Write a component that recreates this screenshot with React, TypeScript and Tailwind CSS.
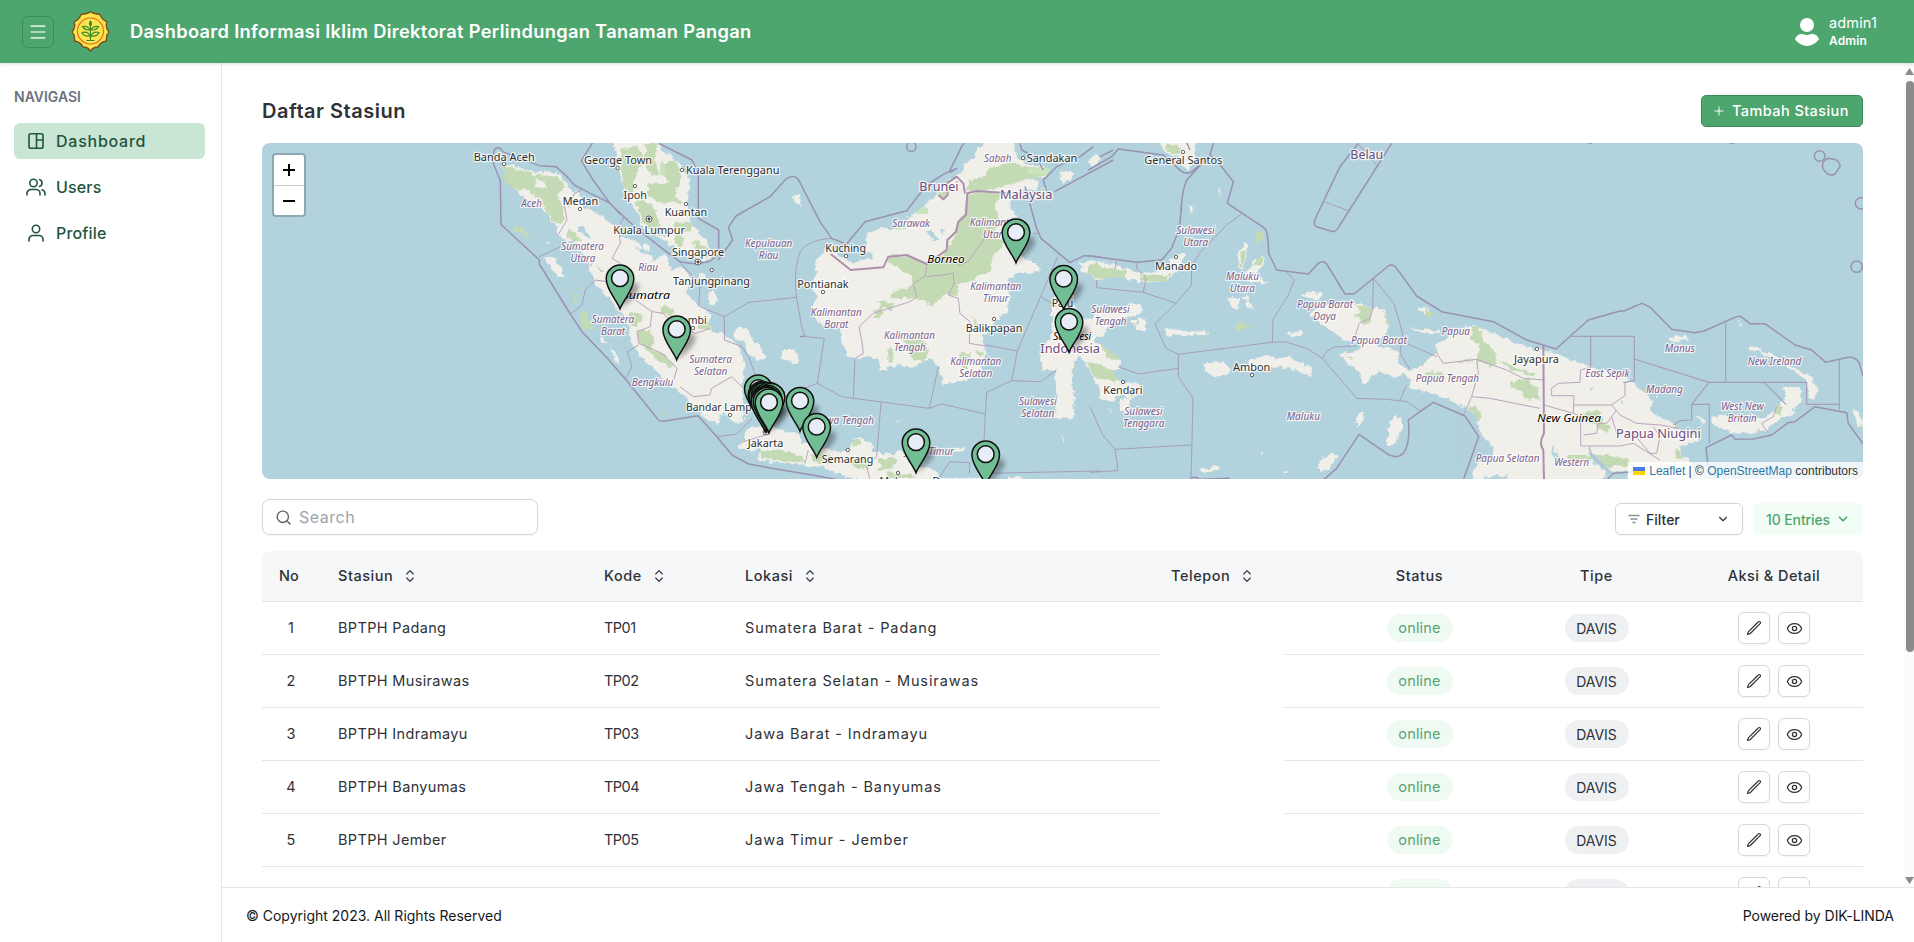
import React from "react";
import { Menu, Plus, Search, ChevronDown, ChevronsUpDown, Eye } from "lucide-react";

type Label = [string, number, number, number];

const cities: Label[] = [
  ["Banda Aceh", 473.7, 160.7, 61], ["George Town", 584, 163.7, 68], ["Kuala Terengganu", 686, 174, 93.5],
  ["Medan", 562.7, 205.3, 35.5], ["Ipoh", 623.5, 198.7, 23.5], ["Kuantan", 664.7, 216, 42.5],
  ["Kuala Lumpur", 613.3, 233.7, 71.7], ["Singapore", 672, 255.7, 52.3], ["Tanjungpinang", 673, 284.7, 77],
  ["Jambi", 679, 324, 27.7], ["Bandar Lampung", 686, 411, 85], ["Jakarta", 747.7, 447.3, 35.7],
  ["Semarang", 821.7, 462.7, 51.7], ["Kuching", 825.3, 251.7, 40.7], ["Pontianak", 797.3, 287.7, 51.3],
  ["Balikpapan", 965.7, 331.7, 56.7], ["Sandakan", 1026.7, 162, 50.7], ["Palu", 1051.7, 307.3, 21.7],
  ["General Santos", 1144.3, 164, 78], ["Manado", 1155, 269.7, 42], ["Ambon", 1233, 371, 37.3],
  ["Kendari", 1103.3, 394.3, 39.3], ["Jayapura", 1514, 363, 45], ["Malang", 879.5, 485, 37], ["Denpasar", 932.3, 485, 50],
];

const provinces: Label[] = [
  ["Aceh", 521.3, 206.7, 20.7], ["Sumatera", 561.3, 250.3, 42.7], ["Utara", 570.5, 262.3, 24.7], ["Riau", 638.3, 270.7, 19.7],
  ["Sumatera", 591.7, 322.7, 42.5], ["Barat", 601, 334.7, 24], ["Bengkulu", 631.7, 386, 41.7],
  ["Sumatera", 689.3, 362.7, 42.7], ["Selatan", 694, 374.7, 33.3], ["Kepulauan", 745, 247, 47.3], ["Riau", 758.7, 259, 19.7],
  ["Sarawak", 892.3, 227.3, 37.7], ["Kalimantan", 810.7, 316.3, 51], ["Barat", 824.3, 328.3, 24],
  ["Kalimantan", 884, 339, 51], ["Tengah", 894, 350.7, 31.7], ["Kalimantan", 970.3, 289.7, 51], ["Timur", 983, 301.7, 25.7],
  ["Kalimantan", 950.3, 365.3, 51], ["Selatan", 959.3, 377, 33], ["Kalimantan", 969.7, 226, 51], ["Utara", 983, 238, 24.7],
  ["Sabah", 984, 162.3, 27.3], ["Jawa Tengah", 818, 424, 56], ["Jawa Timur", 905, 454.7, 49],
  ["Sulawesi", 1019, 405, 37.7], ["Selatan", 1021.3, 416.7, 33], ["Sulawesi", 1176.3, 234, 38.3], ["Utara", 1183.3, 246, 24.7],
  ["Sulawesi", 1091.3, 312.7, 38.3], ["Tengah", 1094.7, 324.7, 31.7], ["Maluku", 1226, 280.3, 33], ["Utara", 1230, 292.3, 24.7],
  ["Papua Barat", 1297, 308.3, 55.7], ["Daya", 1313.3, 320.3, 22.7], ["Papua Barat", 1351, 344, 55.7], ["Papua", 1441.7, 335.3, 28.3],
  ["Papua Tengah", 1415.7, 382, 63.3], ["Maluku", 1286.7, 419.7, 33.3], ["Sulawesi", 1124.3, 415.3, 38.3], ["Tenggara", 1123, 427, 41.3],
  ["Manus", 1664.7, 351.7, 30.3], ["New Ireland", 1747.7, 365.3, 53.7], ["East Sepik", 1585.3, 376.7, 44], ["Madang", 1646, 393, 36.7],
  ["West New", 1721, 409.7, 42.7], ["Britain", 1727.7, 421.7, 29], ["Papua Selatan", 1475.7, 462.3, 63.7], ["Western", 1554.3, 465.7, 34.7],
];

const countries: Label[] = [
  ["Brunei", 919.3, 190.7, 39.3], ["Malaysia", 1000, 199, 52.3], ["Indonesia", 1040.3, 352.7, 59.7],
  ["Belau", 1350.3, 159, 33], ["Papua Niugini", 1616, 437.7, 84.7],
];

const islands: Label[] = [
  ["Sumatra", 622.5, 298.7, 47.5], ["Borneo", 927.3, 262.7, 37.3], ["Sulawesi", 1053.3, 340, 37.7], ["New Guinea", 1537.3, 421.7, 63.7],
];

const dots: [number, number][] = [
  [504, 164], [617.6, 168], [682, 170], [580, 209], [635, 186], [686, 204], [711.8, 270], [730, 415], [693, 328], [847.8, 450],
  [846, 256], [823, 292], [994, 319], [1023, 158], [1183, 152], [1176, 257], [1252, 375], [1123, 382], [1537, 349], [898, 473],
];
const capitals: [number, number][] = [[649, 219], [698, 262], [766, 432]];

const markers: [number, number][] = [
  [1016, 262.5], [620, 308.5], [1063.7, 309], [1069, 352], [676.7, 359.5], [758.3, 418.5], [762, 425], [763, 426], [765, 426], [766, 428],
  [767, 427], [769, 426], [771, 427], [768, 429], [766, 430], [765, 431], [767, 431], [769, 432.5], [800, 431], [816.7, 457], [916, 472.5], [985.7, 484.5],
];

const Labels = ({ items, cls, halo }: { items: Label[]; cls: string; halo: number }) => (
  <g className={cls} stroke="#ffffff" strokeOpacity="0.75" strokeWidth={halo} strokeLinejoin="round" paintOrder="stroke">
    {items.map(([t, x, y, w], i) => (
      <text key={i} x={x} y={y} textLength={w} lengthAdjust="spacingAndGlyphs">{t}</text>
    ))}
  </g>
);

const LAND = "#f1efea";

function StationMap() {
  return (
    <svg className="block h-full w-full" viewBox="262 143 1601 336">
      <defs>
        <filter id="coast" x="0" y="0" width="100%" height="100%">
          <feTurbulence type="fractalNoise" baseFrequency="0.16" numOctaves="3" seed="4" />
          <feDisplacementMap in="SourceGraphic" scale="7" xChannelSelector="R" yChannelSelector="G" />
        </filter>
        <filter id="soft" x="-50%" y="-50%" width="200%" height="200%"><feGaussianBlur stdDeviation="2.5" /></filter>
      </defs>
      <rect x="262" y="143" width="1601" height="336" fill="#b2d2dd" />

      <g filter="url(#coast)">
        <rect x="262" y="143" width="1601" height="336" fill="none" />
        {/* Sumatra */}
        <g transform="translate(262 140) scale(.33333)">
          <path fill={LAND} d="M722 72L745 72 790 90 840 100 880 97 905 115 915 140 950 160 965 200 1010 222 1045 250 1070 265 1075 290 1110 298 1125 330 1165 345 1175 365 1200 345 1215 365 1230 390 1265 378 1290 425 1269 460 1314 500 1344 525 1349 575 1384 580 1434 620 1449 680 1440 740 1442 800 1444 850 1414 845 1379 815 1364 857 1324 830 1294 790 1254 760 1194 705 1144 660 1109 610 1099 560 1064 500 1034 470 1000 430 989 405 975 355 940 310 890 290 885 260 860 225 830 195 800 180 760 150 735 120 722 95Z" />
          <path fill="#b2d2dd" d="M948 258L965 262 985 290 970 292 955 275Z" />
          <path fill="#c4dab5" d="M722 76L760 85 830 105 880 110 900 125 905 145 890 165 900 190 905 220 905 250 880 245 855 215 835 180 790 150 750 145 725 115ZM920 265L945 280 955 300 930 308 915 290ZM955 518L975 515 995 570 970 570 955 545ZM1098 515L1135 520 1140 545 1120 560 1098 550ZM1128 570L1165 570 1180 600 1170 630 1210 645 1235 680 1215 680 1160 640 1128 600ZM1195 500L1220 500 1225 525 1200 525ZM1310 540L1348 545 1345 570 1310 570ZM755 258L775 258 805 285 800 292 760 275ZM1000 370L1025 395 1020 400ZM945 442L968 442 965 448 945 447ZM935 460L945 465 942 488 934 485ZM1190 815L1208 822 1205 828 1190 822Z" />
          <path fill={LAND} d="M850 350L870 352 900 380 902 412 888 410 865 380ZM1015 590L1035 610 1020 608ZM1045 625L1065 645 1075 678 1055 655ZM850 305L862 302 862 312ZM820 115L850 125 855 145 815 140ZM1092 305L1120 298 1138 325 1115 325ZM1142 312L1165 315 1162 335 1145 332ZM1190 350L1210 345 1220 368 1200 370ZM1415 570L1440 560 1462 575 1470 600 1490 615 1512 645 1500 660 1475 655 1455 635 1445 605 1415 595ZM1335 480L1355 450 1368 480 1350 495ZM1560 632L1600 628 1610 665 1590 670 1562 655Z" />
        </g>
        {/* Malay peninsula */}
        <g transform="translate(560 140) scale(.33333)">
          <path fill={LAND} d="M155 -5L165 30 180 100 190 145 220 195 240 235 245 260 290 290 340 320 400 350 430 365 455 355 450 320 415 270 385 250 385 180 385 120 370 80 330 45 300 30 292 -5Z" />
          <path fill="#c4dab5" d="M185 30L235 15 250 60 225 110 215 160 190 140 185 90ZM255 10L290 10 285 60 300 110 270 100 255 60ZM310 70L345 60 365 110 350 150 310 110ZM265 130L350 130 345 165 370 190 320 190 290 185 260 165ZM225 180L245 175 285 210 300 260 320 290 290 285 250 250ZM340 245L400 255 395 275 345 270ZM345 285L372 290 370 320 345 310ZM395 300L440 320 445 355 415 345ZM310 510L335 500 345 525 315 525Z" />
          <path fill="#c8e5bb" d="M300 60L315 65 312 110 300 100Z" />
        </g>
        {/* Borneo, Java */}
        <g transform="translate(680 140) scale(.33333)">
          <path fill={LAND} d="M925 -5L1000 -5 1010 50 1040 70 1105 85 1100 110 1040 115 1080 125 1070 150 990 155 1005 165 985 190 1010 230 975 240 965 300 990 330 1010 345 1060 365 1085 385 1060 400 1010 395 985 425 990 480 980 520 945 545 930 570 905 590 920 640 900 700 860 720 790 737 780 690 750 655 720 670 700 685 660 675 600 690 590 655 545 650 505 655 485 610 480 565 425 560 405 530 395 505 410 470 395 445 410 400 405 370 435 325 450 325 480 350 520 370 580 355 560 330 560 280 610 265 660 265 690 230 740 190 770 160 790 130 845 100 850 75 885 50 895 25Z" />
          <path fill="#c4dab5" d="M865 120L910 110 935 80 1000 70 1040 80 1105 85 1100 105 1040 118 1020 125 960 140 900 155 860 150ZM865 160L935 155 960 170 940 200 960 240 930 290 970 300 960 330 940 345 930 390 900 405 880 425 830 430 835 465 790 470 755 500 735 485 700 475 630 475 640 455 690 440 700 410 680 400 650 380 625 370 630 345 690 350 735 370 790 345 810 310 830 280 830 245 855 220 860 190ZM770 160L805 150 800 175 785 175ZM585 510L610 490 610 530 575 535ZM670 590L735 600 745 640 735 665 690 650ZM625 630L638 620 640 660 625 665ZM590 485L640 490 635 510 605 500ZM840 640L875 640 860 690 835 670ZM885 625L915 640 900 650ZM880 530L900 560 885 570Z" />
          <path fill="#c8e5bb" d="M715 205L740 195 742 225 712 225ZM650 250L672 245 675 268 645 265ZM1040 85L1105 85 1095 105 1045 100Z" />
          <path fill="#b2d2dd" d="M735 270L758 272 775 300 760 300ZM780 270L795 265 785 285Z" />
          <path fill={LAND} d="M200 865L235 860 260 865 300 868 330 880 355 880 370 905 430 925 480 935 515 930 520 895 545 895 575 905 580 935 640 945 660 930 700 975 770 990 785 1030 560 1030 470 1000 440 985 380 975 300 968 230 960 240 930 175 925 190 905ZM820 925L860 925 850 935 820 935ZM340 170L360 165 362 195 342 190ZM55 395L75 400 78 425 60 425ZM85 455L105 455 105 485 90 492ZM650 843L660 845 655 850ZM980 1010L1030 1010 1030 1030 970 1030ZM1145 875L1150 905 1145 895ZM1225 65L1250 40 1260 60 1240 80ZM1140 95L1180 95 1175 115 1145 130Z" />
          <path fill="#c4dab5" d="M240 930L300 930 370 950 375 968 300 962 245 955ZM390 940L440 945 480 960 450 975 400 965ZM520 900L540 900 545 915 525 918ZM595 955L650 955 640 985 600 990ZM500 955L560 950 570 990 520 980ZM620 1000L700 1005 700 1020 620 1020ZM1128 645L1170 640 1185 690 1170 705 1135 700ZM1150 750L1175 760 1165 800 1145 790Z" />
        </g>
        {/* Sulawesi, Maluku, western Papua */}
        <g transform="translate(1090 140) scale(.33333)">
          <path fill={LAND} d="M-30 370L0 360 60 370 100 385 150 400 200 395 240 370 255 345 285 345 275 375 235 420 200 430 150 425 100 415 60 410 20 420 -10 400 -25 395ZM-100 440L-60 440 -40 520 0 540 20 520 100 510 115 495 150 490 160 515 110 530 60 555 45 580 10 600 40 620 90 660 90 690 60 690 100 730 140 730 150 765 120 780 90 760 75 785 30 780 30 745 0 700 -15 665 -30 650 -50 665 -55 730 -45 780 -50 835 -105 835 -100 780 -105 690 -145 690 -150 640 -110 580 -115 520ZM200 -5L320 -5 315 60 295 95 280 80 270 55 225 35ZM295 195L305 198 313 215 303 218ZM385 145L395 148 390 175ZM90 780L115 775 120 835 105 815 90 815ZM55 800L65 820 60 825ZM145 535L165 540 170 580 140 565ZM120 540L140 540 135 560ZM465 305L475 315 470 350 460 390 445 385 445 345ZM490 360L520 345 522 370 500 395 475 400ZM470 390L480 395 500 410 540 430 520 430 480 425ZM410 475L450 475 445 510 425 500ZM455 465L470 465 485 500 498 512 475 500ZM225 568L250 565 280 573 360 575 365 580 250 588 228 585ZM340 670L400 665 425 690 415 705 375 712 345 695ZM480 660L530 645 560 655 600 650 665 685 665 712 620 690 570 680 500 690 465 680ZM595 580L635 570 635 585 610 592ZM630 465L660 455 700 460 690 480 660 475ZM915 820L930 835 935 870 920 910 890 920 895 870ZM820 815L825 825 805 860 795 840ZM690 960L720 940 745 945 720 985 690 1000 685 980ZM325 985L350 990 385 975 390 988 340 1000ZM510 938L520 940 515 945ZM580 990L598 990 595 1000ZM435 965L437 970ZM980 500L1000 498 1020 510 1010 525 990 512ZM960 565L1050 572 1050 580 990 578Z" />
          <path fill={LAND} d="M660 520L690 500 760 490 810 485 840 505 880 505 895 540 890 580 860 610 870 620 900 625 925 640 920 670 960 690 990 680 1040 640 1040 610 1090 580 1150 555 1210 580 1280 610 1340 630 1390 635 1460 665 1530 690 1600 705 1640 740 1680 770 1688 820 1750 850 1760 870 1825 885 1830 905 1770 915 1775 950 1800 960 1810 1030 1138 1030 1160 970 1205 950 1210 935 1170 870 1160 835 1130 805 1060 770 1000 755 950 740 960 715 940 700 915 715 870 690 860 700 840 720 820 730 800 690 760 655 750 640 790 635 820 620 800 605 760 605 740 580 700 560 680 540Z" />
          <path fill="#c4dab5" d="M0 370L20 365 35 380 110 390 105 415 60 410 20 415 -10 400ZM145 405L180 405 240 405 230 425 180 425 150 420ZM-10 665L40 675 90 715 75 725 10 710ZM35 615L55 625 85 655 80 665 45 645ZM500 280L520 275 522 300 500 312 490 300ZM455 330L470 335 460 385 450 380ZM500 355L520 350 515 370 490 380ZM435 555L460 545 485 568 440 570ZM335 590L340 615 335 615ZM385 148L395 150 392 165ZM790 490L845 505 840 550 820 552 795 530 810 510ZM875 510L900 545 890 550ZM1005 505L1040 525 1010 530ZM1145 558L1168 560 1180 600 1220 640 1220 670 1195 680 1160 660 1170 610 1145 600ZM1100 665L1150 658 1130 668ZM1220 655L1290 690 1340 700 1330 710 1260 690ZM1000 695L1060 700 1070 715 1020 710ZM760 645L790 655 785 665ZM1150 795L1175 820 1170 845 1130 800ZM1258 725L1310 715 1345 745 1348 775 1320 780 1280 745 1255 740ZM225 10L270 20 270 45 235 35ZM120 755L130 755 125 780Z" />
        </g>
        {/* Papua New Guinea */}
        <g transform="translate(1460 140) scale(.33333)">
          <path fill={LAND} d="M750 830L790 828 830 840 880 840 905 835 940 815 960 795 978 770 970 742 1020 740 1030 775 1005 800 1000 825 960 835 920 870 860 880 810 875 760 855ZM865 620L890 620 905 635 950 650 1000 680 1040 705 1065 730 1075 755 1060 780 1045 755 1040 720 1000 690 960 665 900 638 870 632ZM630 590L680 588 685 600 630 603ZM1180 800L1215 850 1215 880 1190 850ZM832 545L846 555 835 555ZM712 825L735 840 725 850ZM585 765L595 765 590 778Z" />
          <path fill="#c4dab5" d="M370 815L425 815 430 850 450 860 440 880 400 850 370 840ZM320 945L440 945 500 960 520 975 440 985 400 960 325 970ZM645 920L660 940 670 960 650 955ZM945 800L970 800 960 820 945 815ZM640 850L660 860 650 865ZM1200 850L1212 860 1205 875ZM480 780L490 782 486 790Z" />
          <path fill="#b2d2dd" d="M-10 790L50 830 60 880 105 925 75 948 30 970 15 1000 -20 940ZM275 910L295 950 315 965 295 970 280 945ZM390 740L398 740 396 758ZM70 1010L150 1005 130 1025 70 1025ZM380 920L398 965 440 995 420 1030 505 1030 505 995 450 990Z" fillOpacity="0.95" />
        </g>
      </g>

      {/* Maritime limits and state borders */}
      <g fill="none" stroke="#9a92b2" strokeLinejoin="round">
        <g transform="translate(262 140) scale(.33333)" strokeWidth="4.5">
          <path d="M1000 -5L975 35 958 62 990 115 1040 185 1074 222M722 35Q712 15 698 28L690 60 715 122 717 253 735 270 832 360 832 372 925 522 960 575 1030 648 1090 717 1180 828Q1190 848 1210 843L1308 827 1365 890 1410 945 1460 972 1560 990 1650 1005 1760 1025M722 35L800 65 832 77 882 80 915 110 937 135 985 160 1040 187 1085 230 1130 270 1200 325 1254 365 1300 372M1190 10L1290 60 1309 100 1309 235 1370 270 1370 345 1340 365 1300 372" />
          <path strokeWidth="3" stroke="#a79dbb" d="M832 350L895 320M925 522L960 495 970 450 1000 420 1035 425M1090 717L1110 680 1096 635 1130 615M1365 890L1425 882 1470 835M1085 232L1072 260M1250 365L1285 400 1314 440 1310 500M1387 530L1387 600 1440 620 1460 650 1485 720M1314 500L1387 530 1460 487 1604 472M960 150L937 160 920 200" />
          <path strokeWidth="3" stroke="#bba4bf" d="M905 180L915 240 885 290M1070 265L1075 310 1050 355 1075 370 1085 440 1120 480 1170 515 1165 560 1125 575 1130 610 1200 640 1245 685 1235 720M1000 350L985 380M1170 515L1205 520 1225 545 1300 580 1345 565" />
        </g>
        <g transform="translate(680 140) scale(.33333)" strokeWidth="4.5">
          <path d="M115 360L158 300 145 262 168 228 270 170 315 120Q340 100 355 118L420 245 455 295 500 312 555 245 680 212 740 135 790 103 830 85 810 98M808 95L845 20 862 -5M1035 140L1070 265 1083 295 1170 368 1213 347 1260 350M1020 10L1025 30 1070 55 1090 90M1260 50L1300 30M1124 155L1300 60M1100 155L1090 120 1130 80 1200 50 1240 20M360 590L375 588" />
          <circle cx="694" cy="20" r="14" />
          <path strokeWidth="3" stroke="#a79dbb" d="M455 295Q370 300 355 350Q340 410 350 475L365 560 375 590 433 595 412 730 485 770 748 805 785 792 915 822M412 730L310 770M525 655L520 775M603 788L590 950M775 680L748 805M918 615L1012 633 1133 350M1012 633L995 722 920 757 912 900M995 722L1083 725 1130 690M1083 470L1130 500M1060 280L1072 280M780 1010L810 965 870 968 868 1000M917 1000L1260 993" />
          <path strokeWidth="6" stroke="#ad8fae" d="M452 342L512 390 610 382 625 350 680 345 740 372 800 330 802 300 828 275 835 245 858 225 862 160 890 153 990 160M775 165L790 178 803 165 800 130 830 110 850 130 855 160" />
          <path strokeWidth="3" stroke="#bba4bf" d="M740 375L735 410 700 430 710 470 690 485 580 520 537 560 545 600 550 640 525 655M740 410L790 405 820 400 822 430 805 465 835 475 840 520 870 545 868 610 918 618M835 375L865 365 910 300 935 250M0 740L40 770 90 765 95 745 155 710 190 745M385 930L375 970M590 950L560 980 570 1020M190 905L255 885" />
        </g>
        <g transform="translate(1090 140) scale(.33333)" strokeWidth="4.5">
          <path d="M-5 90L65 50 85 27 220 45 275 95Q295 105 310 92L360 45 375 -5M285 -5L300 30M360 45L395 80 430 125 412 190 525 265Q535 280 536 340L560 390 655 402 685 370Q700 360 710 372L765 462 792 462 895 378Q910 370 920 385L980 468 1055 515 1210 545 1310 600 1360 615M275 200L268 265 245 325 215 360 140 367 -5 347M360 45L290 120 280 150 272 210M805 10L750 80 674 240Q670 260 685 262L730 275Q742 272 750 255L905 10M700 1020L740 985 807 883 890 940Q920 960 940 940 962 910 955 840L1030 787 1125 828 1166 890 1120 1020M300 1020Q310 1005 330 1018L420 1015" />
          <circle cx="490" cy="-10" r="12" />
          <path strokeWidth="3" stroke="#a79dbb" d="M803 10L860 75M705 186L775 212M455 222L410 255 328 340 305 380 304 436 258 490 195 552 228 625 265 643 265 710 309 775 303 1020M258 490L160 457 20 443 20 420M265 643L545 607 585 605 650 625 697 655 800 775 890 778 950 785 990 812M547 607L549 538 595 465 613 420 588 395M697 655Q715 620 745 620L800 618M850 415L848 505M850 415L912 490 938 580 930 640 960 690M938 605L1040 650M990 812L1030 787M265 685L145 702 85 680M75 928L303 915M0 800L38 885 75 928 82 970 82 992 0 997M80 362L75 385M140 367L140 385 168 415 160 457M930 780L950 735" />
          <path strokeWidth="3" stroke="#bba4bf" d="M848 505L840 535 808 550 790 605M1040 640L1060 670 1160 658 1165 700 1145 770 1200 775 1350 805M1160 658L1250 690 1300 715 1360 720M1145 770L1120 825" />
        </g>
        <g transform="translate(1460 140) scale(.33333)" strokeWidth="4.5">
          <path d="M250 615L288 627 385 540 480 513 492 513 545 490Q560 495 572 503L635 568 705 578 732 573 830 530Q840 526 850 535L870 551 915 551 1005 615 1055 630 1097 667 1165 652Q1185 650 1197 667L1210 710M440 1020L460 1000 520 995M745 985L738 923 815 885 825 898 880 897 935 885 985 848 1005 845 1065 800 1160 818 1165 850 1190 885 1210 912" />
          <circle cx="1079" cy="48" r="16" /><circle cx="1203" cy="190" r="17" /><circle cx="1190" cy="380" r="17" /><circle cx="390" cy="-4" r="14" /><circle cx="817" cy="-4" r="14" />
          <path d="M1088 72Q1090 60 1105 55L1130 60Q1142 72 1140 80L1125 102Q1110 110 1098 98Q1085 85 1088 72Z" />
          <path strokeWidth="6" stroke="#ad8fae" d="M250 615L252 880Q235 910 250 930L252 1020" />
          <path strokeWidth="3.5" stroke="#a79dbb" d="M332 589L523 589 523 722 490 728M392 589L392 685M523 657L747 727 1040 727 1040 793 1138 793M747 727L695 793 748 793 748 910M695 793L695 840 660 842 640 855M797 548L797 727M912 727L978 793M1138 660L1138 810" />
          <path strokeWidth="3" stroke="#bba4bf" d="M252 795L340 820 342 767 275 767 275 745 295 730 360 727 362 690 392 682M342 795L455 795 495 767 495 728M340 820L362 830 362 918 480 918 520 910 600 960M455 795L480 825 530 850 600 855 655 865M455 830L470 880 520 880 570 940 590 940 600 890 580 860M370 885L410 880 415 850 440 850 470 810M388 920L395 945 450 1000M905 850L925 880M905 850L940 830 950 800" />
        </g>
      </g>

      <g fill="#ffffff" stroke="#555555" strokeWidth="0.9">
        {dots.map(([x, y], i) => <circle key={i} cx={x} cy={y} r="1.7" />)}
        {capitals.map(([x, y], i) => <g key={i}><circle cx={x} cy={y} r="3" /><circle cx={x} cy={y} r="1.2" fill="#333333" /></g>)}
      </g>

      <Labels items={provinces} cls="fill-[#7d6089] font-['Noto_Sans'] text-[10px] italic" halo={2.4} />
      <Labels items={cities} cls="fill-[#303030] font-['Noto_Sans'] text-[11.3px]" halo={2.6} />
      <Labels items={countries} cls="fill-[#714d7a] font-['Noto_Sans'] text-[12px]" halo={2.6} />
      <Labels items={islands} cls="fill-[#000000] font-['Noto_Sans'] text-[11.6px] italic" halo={2} />

      {markers.map(([x, y], i) => (
        <path key={i} d={`M${x} ${y}L${x + 8} ${y - 22}Q${x + 16} ${y - 30} ${x + 19} ${y - 22}Q${x + 18} ${y - 12} ${x} ${y}Z`} fill="#000000" fillOpacity={i > 5 && i < 17 ? 0.08 : 0.35} filter="url(#soft)" />
      ))}
      {markers.map(([x, y], i) => (
        <g key={i} transform={`translate(${x} ${y + 1})`} stroke="#101010" strokeWidth="1.5">
          <path d="M0 -0.8C-3 -9 -13.8 -20 -13.8 -30.6A13.8 13.8 0 0 1 13.8 -30.6C13.8 -20 3 -9 0 -0.8Z" fill="#72be94" />
          <circle cx="0" cy="-31.3" r="8.4" fill="#e6edf7" />
        </g>
      ))}
    </svg>
  );
}

const Emblem = () => (
  <svg viewBox="0 0 39 41" className="h-[41px] w-[39px]">
    <path d="M19.5 .8C22 3 25 2.700 29 3.500C30 7 32 9 36 11C34.500 14 35 17 38 21C36 23 35 26 35.500 30C31 30.500 29 32 27 36C23 36 21 37.500 19.500 40.300C18 37.500 16 36 12 36C10 32 8 30.500 3.500 30C4 26 3 23 1 21C4 17 4.500 14 3 11C7 9 9 7 10 3.500C14 2.700 17 3 19.500 .8Z" fill="#f6e447" stroke="#7b4a24" strokeWidth="1.300" />
    <circle cx="19.500" cy="20" r="13" fill="#f9e64e" stroke="#e8622a" strokeWidth="1.100" />
    <g fill="none" stroke="#3f8a2c" strokeWidth="1.200">
      <path d="M19.500 10V29M15.500 29.500H23.500" />
      <path d="M19.500 15Q17.500 12.500 19.500 10Q21.500 12.500 19.500 15ZM19 19Q13 19 11.500 15.500Q17 14.500 19 19ZM20 19Q26 19 27.500 15.500Q22 14.500 20 19ZM19 25Q13 26 11 21.500Q17 20 19 25ZM20 25Q26 26 28 21.500Q22 20 20 25Z" />
    </g>
  </svg>
);

const PencilIcon = () => (
  <svg viewBox="0 0 24 24" className="size-4 fill-none stroke-current stroke-[1.800]" strokeLinecap="round" strokeLinejoin="round">
    <path d="M16.862 4.487l1.687-1.688a1.875 1.875 0 112.652 2.652L6.832 19.820a4.500 4.500 0 01-1.897 1.130l-2.685.8.8-2.685a4.500 4.500 0 011.130-1.897L16.863 4.487z" />
  </svg>
);

const NavItem = ({ icon, label, active }: { icon: React.ReactNode; label: string; active?: boolean }) => (
  <a className={`flex h-9 items-center rounded-[6px] pl-3 text-base font-medium text-[#22543d] ${active ? "bg-[#c9e5d3] tracking-[0.75px]" : "tracking-[0.15px]"}`}>
    <svg viewBox="0 0 20 18" className="mr-[10px] h-[18px] w-5 fill-none stroke-[#22543d] stroke-[1.600]" strokeLinecap="round" strokeLinejoin="round">{icon}</svg>
    <span>{label}</span>
  </a>
);

const SortHead = ({ label }: { label: string }) => (
  <div className="flex items-center gap-[9px] pl-3">
    <span>{label}</span>
    <ChevronsUpDown size={16} strokeWidth={1.700} />
  </div>
);

const COLS = "grid grid-cols-[64px_266px_141px_427px_124px_47px_177px_177px_178px]";

const rows = [
  ["BPTPH Padang", "TP01", "Sumatera Barat - Padang"],
  ["BPTPH Musirawas", "TP02", "Sumatera Selatan - Musirawas"],
  ["BPTPH Indramayu", "TP03", "Jawa Barat - Indramayu"],
  ["BPTPH Banyumas", "TP04", "Jawa Tengah - Banyumas"],
  ["BPTPH Jember", "TP05", "Jawa Timur - Jember"],
  ["BPTPH Maros", "TP06", "Sulawesi Selatan - Maros"],
];

export default function App() {
  return (
    <div className="flex h-[942px] w-[1914px] flex-col overflow-hidden bg-white font-['Inter',sans-serif] text-[#2f3237]">
      <header className="relative z-10 flex h-[63px] shrink-0 items-center bg-[#4ea66f] pl-[22px] pr-9 shadow-[0_1px_4px_rgba(0,0,0,0.14)]">
        <button className="flex size-8 items-center justify-center rounded-[6px] border border-[#3f8c5c] text-[#d3ecdc]"><Menu size={20} strokeWidth={2} /></button>
        <div className="ml-[17px]"><Emblem /></div>
        <h1 className="ml-5 whitespace-nowrap text-[18.250px] font-semibold tracking-[0.33px] text-white">Dashboard Informasi Iklim Direktorat Perlindungan Tanaman Pangan</h1>
        <div className="ml-auto flex items-center gap-[10px] text-white">
          <svg viewBox="0 0 24 28" className="h-7 w-6 fill-white"><circle cx="12" cy="7" r="7" /><path d="M0 21.500Q1 17 6.500 15.800Q12 18 17.500 15.800Q23 17 24 21.500Q18.500 28 12 28Q5.500 28 0 21.500Z" /></svg>
          <div className="w-[49px] whitespace-nowrap">
            <div className="text-[14.500px] leading-[18px] tracking-[0.15px]">admin1</div>
            <div className="text-[12px] font-semibold leading-[17px] tracking-[0.15px]">Admin</div>
          </div>
        </div>
      </header>

      <div className="flex min-h-0 flex-1">
        <aside className="w-[222px] shrink-0 border-r border-[#e5e7eb] px-[14px] pt-6">
          <div className="text-[14px] font-semibold leading-5 text-[#6b7280]">NAVIGASI</div>
          <nav className="mt-4 flex w-[191px] flex-col gap-[10px]">
            <NavItem active label="Dashboard" icon={<><rect x="3" y="1.800" width="14" height="14.400" rx="1.800" /><path d="M10.500 2V16M10.500 8H16.800" /></>} />
            <NavItem label="Users" icon={<><circle cx="7.500" cy="5" r="3.700" /><path d="M1 17V15.500A4 4 0 0 1 5 11.500H10A4 4 0 0 1 14 15.500V17M13.500 1.500A3.700 3.700 0 0 1 13.500 8.500M19 17V15.500A4 4 0 0 0 16 11.700" /></>} />
            <NavItem label="Profile" icon={<><circle cx="10" cy="5" r="3.700" /><path d="M3 17V15.500A4 4 0 0 1 7 11.500H13A4 4 0 0 1 17 15.500V17" /></>} />
          </nav>
        </aside>

        <div className="flex min-w-0 flex-1 flex-col">
          <div className="flex min-h-0 flex-1">
            <main className="min-w-0 flex-1 overflow-hidden pl-10 pt-8">
              <div className="w-[1601px]">
                <div className="flex h-8 items-center justify-between">
                  <h2 className="text-[20px] font-semibold tracking-[0.5px]">Daftar Stasiun</h2>
                  <button className="flex h-8 w-[162px] items-center gap-1.5 whitespace-nowrap rounded-[5px] border border-[#3c8a5a] bg-[#4ea66f] pl-[10px] text-[14.500px] font-medium tracking-[0.42px] text-white"><Plus size={14} strokeWidth={1.700} />Tambah Stasiun</button>
                </div>

                <div className="relative mt-4 h-[336px] overflow-hidden rounded-lg">
                  <StationMap />
                  <div className="absolute left-[10px] top-[10px] flex w-[34px] flex-col rounded-[4px] border-2 border-black/20 bg-white bg-clip-padding text-black">
                    <div className="flex h-[31px] items-center justify-center border-b border-[#cccccc]"><svg viewBox="0 0 12 12" className="size-3 stroke-black stroke-2"><path d="M0 6H12M6 0V12" /></svg></div>
                    <div className="flex h-[29px] items-center justify-center"><svg viewBox="0 0 12 12" className="size-3 stroke-black stroke-2"><path d="M0 6H12" /></svg></div>
                  </div>
                  <div className="absolute bottom-0 right-0 flex h-[17px] items-center whitespace-pre bg-white/80 px-[5px] font-['Liberation_Sans'] text-[12px] text-[#333333]">
                    <svg viewBox="0 0 12 8" className="mr-1 h-2 w-3"><path fill="#4c7be1" d="M0 0h12v4H0z" /><path fill="#ffd500" d="M0 4h12v4H0z" /></svg>
                    <span className="text-[#2e7ba8]">Leaflet</span> | © <span className="text-[#2e7ba8]">OpenStreetMap</span> contributors
                  </div>
                </div>

                <div className="mt-5 flex h-9 items-end justify-between">
                  <div className="flex h-9 w-[276px] items-center gap-[7px] rounded-lg border border-[#d1d5db] pl-3 text-base tracking-[0.5px] text-[#9ca3af] shadow-xs"><Search size={17} strokeWidth={2} className="text-[#62666d]" />Search</div>
                  <div className="flex gap-[10px]">
                    <div className="flex h-8 w-32 items-center rounded-[6px] border border-[#d1d5db] px-3 text-[14px] font-medium shadow-xs">
                      <svg viewBox="0 0 12 12" className="mr-[6px] size-3 stroke-[#8b9098] stroke-[1.500]"><path d="M.5 2.500H11.500M2.500 6H9.500M4.500 9.500H7.500" /></svg>
                      Filter<ChevronDown size={14} strokeWidth={2} className="ml-auto" />
                    </div>
                    <div className="flex h-8 w-[110px] items-center justify-center gap-1.5 whitespace-nowrap rounded-[6px] bg-[#f2fdf6] text-[14px] font-medium tracking-[-0.1px] text-[#4ea66f]">10 Entries<ChevronDown size={14} strokeWidth={3} /></div>
                  </div>
                </div>

                <div className="mt-4">
                  <div className={`${COLS} h-[51px] items-center rounded-t-lg border-b border-[#e2e5e8] bg-[#f5f7f9] text-[14.500px] font-medium tracking-[0.55px]`}>
                    <div className="pr-[10px] text-center tracking-[0.15px]">No</div>
                    <SortHead label="Stasiun" />
                    <SortHead label="Kode" />
                    <SortHead label="Lokasi" />
                    <div className="col-span-2 -ml-px"><SortHead label="Telepon" /></div>
                    <div className="text-center">Status</div>
                    <div className="text-center">Tipe</div>
                    <div className="text-center tracking-[0.45px]">Aksi &amp; Detail</div>
                  </div>
                  {rows.map((r, i) => (
                    <div key={r[1]} className={`${COLS} h-[53px] text-[14.500px] tracking-[0.2px] [&>*]:flex [&>*]:h-full [&>*]:items-center [&>*]:border-b [&>*]:border-[#e4e6e9]`}>
                      <div className="justify-center pr-[6px]">{i + 1}</div>
                      <div className="pl-3 tracking-[0.35px]">{r[0]}</div>
                      <div className="pl-3 tracking-[-0.5px]">{r[1]}</div>
                      <div className="pl-3 tracking-[0.88px]">{r[2]}</div>
                      <div className={i < 4 ? "!border-white" : ""} />
                      <div />
                      <div className="justify-center"><span className="flex h-7 w-[66px] items-center justify-center rounded-full bg-[#effaf3] text-[#56a373]">online</span></div>
                      <div className="justify-center"><span className="flex h-7 w-16 items-center justify-center rounded-full bg-[#eff0f2] text-[14px] tracking-normal">DAVIS</span></div>
                      <div className="justify-center gap-2">
                        <span className="flex size-8 items-center justify-center rounded-[6px] border border-[#d5d8dc] shadow-xs"><PencilIcon /></span>
                        <span className="flex size-8 items-center justify-center rounded-[6px] border border-[#d5d8dc] shadow-xs"><Eye size={17} strokeWidth={1.800} /></span>
                      </div>
                    </div>
                  ))}
                </div>
              </div>
            </main>
            <div className="flex w-[11px] shrink-0 flex-col items-end bg-[#fbfbfb] pb-[3px] pt-[5px]">
              <svg viewBox="0 0 9 7" className="h-[7px] w-[9px] fill-[#8b8b8b]"><path d="M0 7L4.500 0L9 7Z" /></svg>
              <div className="mt-[6px] h-[571px] w-2 rounded-full bg-[#8b8b8b]" />
              <svg viewBox="0 0 9 7" className="mt-auto h-[7px] w-[9px] fill-[#8b8b8b]"><path d="M0 0L4.500 7L9 0Z" /></svg>
            </div>
          </div>
          <footer className="flex h-[55px] shrink-0 items-center justify-between border-t border-[#e5e7eb] pl-6 pr-5 pt-px text-[14px] text-[#15171a]">
            <span>© Copyright 2023. All Rights Reserved</span>
            <span className="tracking-[-0.03px]">Powered by DIK-LINDA</span>
          </footer>
        </div>
      </div>
    </div>
  );
}
